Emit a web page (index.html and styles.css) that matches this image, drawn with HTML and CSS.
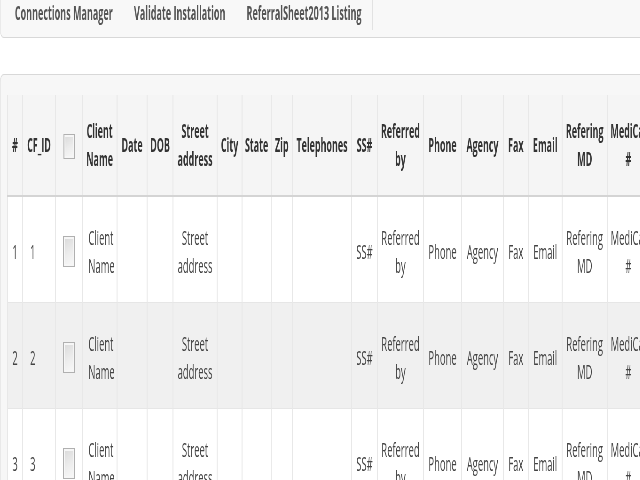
FILE: index.html
```html
<!DOCTYPE html>
<html>
<head>
<meta charset="utf-8">
<title>ReferralSheet2013 Listing</title>
<link rel="stylesheet" href="styles.css">
</head>
<body>
<div class="stage">
  <nav class="navbar">
    <ul class="nav">
      <li><a href="#">Connections Manager</a></li>
      <li><a href="#">Validate Installation</a></li>
      <li><a href="#">ReferralSheet2013 Listing</a></li>
    </ul>
  </nav>
  <div class="panel">
    <table class="grid">
      <colgroup>
        <col class="w-num"><col class="w-id"><col class="w-chk"><col class="w-name"><col class="w-date"><col class="w-dob"><col class="w-street"><col class="w-city"><col class="w-state"><col class="w-zip"><col class="w-tel"><col class="w-ss"><col class="w-ref"><col class="w-phone"><col class="w-agency"><col class="w-fax"><col class="w-email"><col class="w-md"><col class="w-medi">
      </colgroup>
      <thead>
        <tr>
          <th>#</th><th>CF_ID</th><th><span class="chk chk-head"></span></th><th>Client<br>Name</th><th>Date</th><th>DOB</th><th>Street<br>address</th><th>City</th><th>State</th><th>Zip</th><th>Telephones</th><th>SS#</th><th>Referred<br>by</th><th>Phone</th><th>Agency</th><th>Fax</th><th>Email</th><th>Refering<br>MD</th><th>MediCal<br>#</th>
        </tr>
      </thead>
      <tbody>
        <tr>
          <td>1</td><td class="left-id">1</td><td><span class="chk"></span></td><td class="left-name">Client<br>Name</td><td></td><td></td><td>Street<br>address</td><td></td><td></td><td></td><td></td><td>SS#</td><td>Referred<br>by</td><td>Phone</td><td>Agency</td><td>Fax</td><td>Email</td><td>Refering<br>MD</td><td>MediCal<br>#</td>
        </tr>
        <tr>
          <td>2</td><td class="left-id">2</td><td><span class="chk"></span></td><td class="left-name">Client<br>Name</td><td></td><td></td><td>Street<br>address</td><td></td><td></td><td></td><td></td><td>SS#</td><td>Referred<br>by</td><td>Phone</td><td>Agency</td><td>Fax</td><td>Email</td><td>Refering<br>MD</td><td>MediCal<br>#</td>
        </tr>
        <tr>
          <td>3</td><td class="left-id">3</td><td><span class="chk"></span></td><td class="left-name">Client<br>Name</td><td></td><td></td><td>Street<br>address</td><td></td><td></td><td></td><td></td><td>SS#</td><td>Referred<br>by</td><td>Phone</td><td>Agency</td><td>Fax</td><td>Email</td><td>Refering<br>MD</td><td>MediCal<br>#</td>
        </tr>
      </tbody>
    </table>
  </div>
</div>
</body>
</html>
```
FILE: styles.css
```css
html, body {
  margin: 0;
  padding: 0;
  overflow: hidden;
  background: #ffffff;
}

body {
  font-family: "Open Sans", "Liberation Sans", sans-serif;
  color: #333333;
}

.stage {
  width: 1500px;
  transform: scaleX(0.47);
  transform-origin: 0 0;
  will-change: transform;
  -webkit-font-smoothing: antialiased;
}

/* top navigation bar */
.navbar {
  height: 37px;
  background: #f8f8f8;
  border: 1px solid #d8d8d8;
  border-top: none;
  border-right: none;
  border-radius: 0 0 0 8px;
}

.nav {
  display: flex;
  list-style: none;
  margin: 0;
  padding: 0 0 0 8px;
  height: 30px;
  width: max-content;
  border-right: 2px solid #e2e2e2;
}

.nav a {
  display: block;
  padding: 0 22.5px;
  line-height: 26px;
  font-size: 19.2px;
  font-weight: 700;
  color: #555555;
  text-decoration: none;
  white-space: nowrap;
}

/* panel holding the grid */
.panel {
  margin-top: 36px;
  background: #f7f7f7;
  border: 1px solid #d8d8d8;
  border-right: none;
  border-bottom: none;
  border-radius: 8px 0 0 0;
  padding: 20px 0 0 14px;
  height: 420px;
}

.grid {
  border-collapse: collapse;
  table-layout: fixed;
  width: 1366px;
}

.w-num { width: 32px; }
.w-id { width: 70px; }
.w-chk { width: 57px; }
.w-name { width: 74px; }
.w-date { width: 64px; }
.w-dob { width: 55px; }
.w-street { width: 94px; }
.w-city { width: 53px; }
.w-state { width: 62px; }
.w-zip { width: 45px; }
.w-tel { width: 126px; }
.w-ss { width: 55px; }
.w-ref { width: 98px; }
.w-phone { width: 81px; }
.w-agency { width: 89px; }
.w-fax { width: 53px; }
.w-email { width: 72px; }
.w-md { width: 96px; }
.w-medi { width: 90px; }

.grid th,
.grid td {
  border-left: 2px solid #e8e8e8;
  border-right: 2px solid #e8e8e8;
  padding: 0 4px;
  text-align: center;
  vertical-align: middle;
  white-space: nowrap;
}

.grid th {
  height: 100px;
  background: #f5f5f5;
  font-size: 19px;
  line-height: 28px;
  font-weight: 700;
  color: #333333;
  border-bottom: 2px solid #d4d4d4;
}

.grid td {
  height: 101px;
  padding-top: 4px;
  background: #ffffff;
  font-size: 20px;
  line-height: 28px;
  font-weight: 400;
  color: #444444;
  border-bottom: 1px solid #e6e6e6;
}

.grid tbody tr:nth-child(even) td {
  background: #f0f0f0;
}

.grid td.left-id {
  text-align: left;
  padding-left: 15px;
}

.grid td.left-name {
  text-align: left;
  padding-left: 12px;
}

/* checkboxes */
.chk {
  display: inline-block;
  vertical-align: middle;
  width: 26px;
  height: 31px;
  box-sizing: border-box;
  border: 1px solid #b0b0b0;
  border-left-width: 2px;
  border-right-width: 2px;
  background: linear-gradient(160deg, #d9d9d9 0%, #ededed 55%, #f9f9f9 100%);
  box-shadow: inset 0 0 0 2px #f6f6f6;
}

.chk-head {
  width: 24px;
  height: 25px;
}
```
